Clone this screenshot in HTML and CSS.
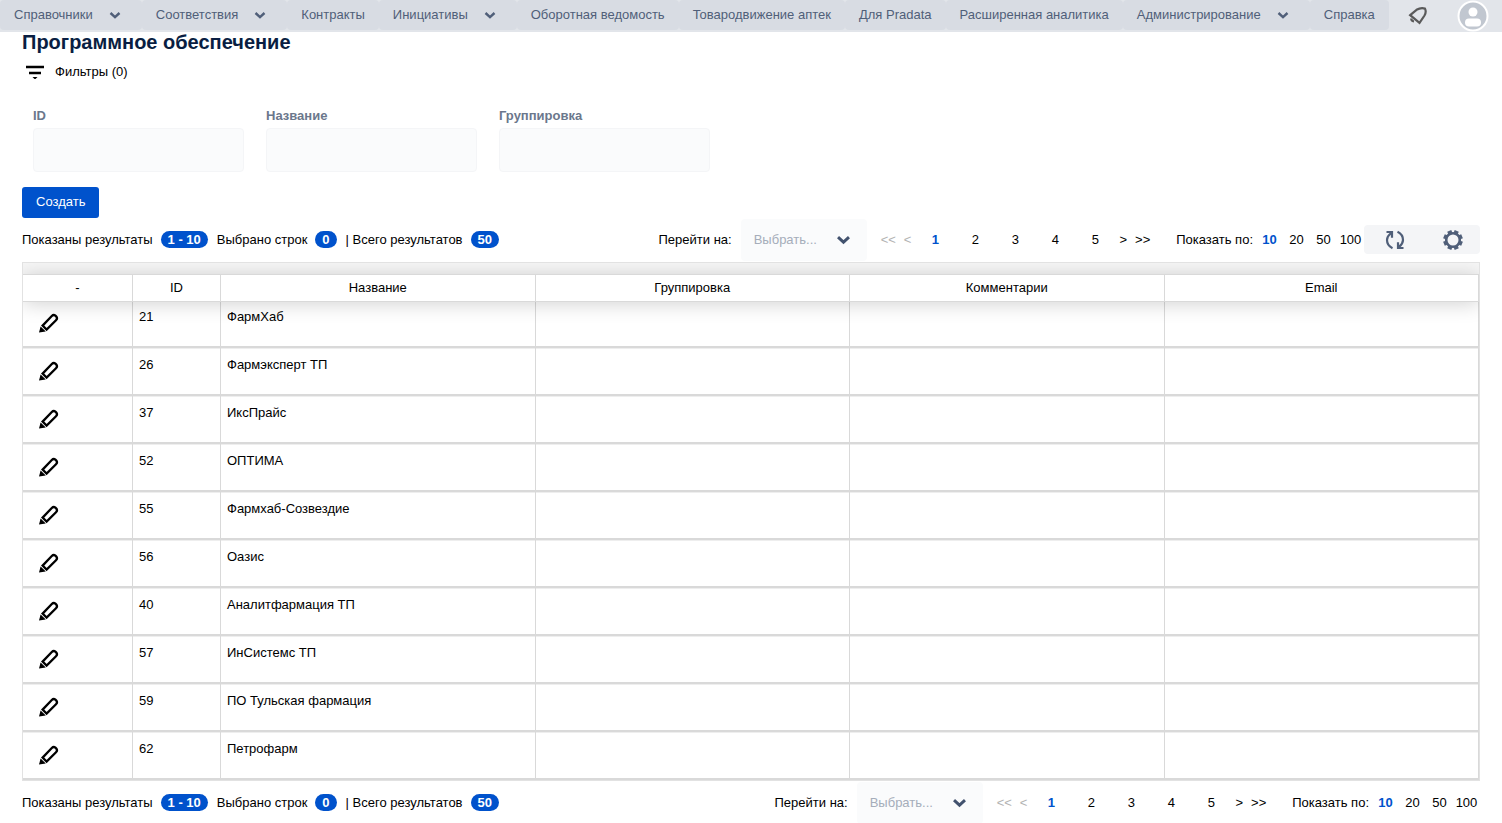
FILE: index.html
```html
<!DOCTYPE html>
<html lang="ru">
<head>
<meta charset="utf-8">
<title>Программное обеспечение</title>
<link rel="stylesheet" href="styles.css">
</head>
<body>
<svg class="sprite" aria-hidden="true">
  <symbol id="chevron" viewBox="0 0 14 14"><path d="M2.500 5 7 9.200l4.500-4.200" fill="none" stroke="currentColor" stroke-width="2.400"/></symbol>
  <symbol id="pencil" viewBox="0 0 20 20"><path d="M3.600 12.600 12.800 3Q14.600 1.200 16.400 2.700L17.300 3.600Q18.800 5.400 17 7.200L7.600 16.600Z" fill="none" stroke="currentColor" stroke-width="2.300"/><path d="M1.600 13.400 6.800 18.400 0 19.600Z" fill="currentColor"/></symbol>
</svg>

<header class="topbar">
  <nav class="menu">
    <button class="menu-item has-sub" type="button">Справочники <svg class="menu-chevron"><use href="#chevron"/></svg></button>
    <button class="menu-item has-sub" type="button">Соответствия <svg class="menu-chevron"><use href="#chevron"/></svg></button>
    <a class="menu-item" href="#">Контракты</a>
    <button class="menu-item has-sub" type="button">Инициативы <svg class="menu-chevron"><use href="#chevron"/></svg></button>
    <a class="menu-item" href="#">Оборотная ведомость</a>
    <a class="menu-item" href="#">Товародвижение аптек</a>
    <a class="menu-item" href="#">Для Pradata</a>
    <a class="menu-item" href="#">Расширенная аналитика</a>
    <button class="menu-item has-sub" type="button">Администрирование <svg class="menu-chevron"><use href="#chevron"/></svg></button>
    <a class="menu-item" href="#">Справка</a>
  </nav>
  <div class="account">
    <button class="icon-button" type="button" aria-label="Уведомления">
      <svg class="bell" viewBox="0 0 20 20"><path d="M2.200 9.200 8.500 3.800Q13 1.200 17 2.600Q18.600 6 16.500 9.500L11.500 16.800Z" fill="none" stroke="currentColor" stroke-width="2.200"/><path d="M3.200 12.500Q3.200 15 6 15.500" fill="none" stroke="currentColor" stroke-width="2.200"/></svg>
    </button>
    <button class="icon-button" type="button" aria-label="Профиль">
      <svg class="avatar" viewBox="0 0 32 32"><circle cx="16" cy="16" r="14.500" fill="#c1c7d0" stroke="#fff" stroke-width="2"/><circle cx="16" cy="12" r="4.500" fill="#fff"/><rect x="8" y="18.500" width="16" height="8" rx="4" fill="#fff"/></svg>
    </button>
  </div>
</header>

<main class="page">
  <h1 class="title">Программное обеспечение</h1>
  <button class="filter-toggle" type="button">
    <svg class="filter-icon" viewBox="0 0 20 14"><path d="M1 2h18M4 8h12" stroke="currentColor" stroke-width="2.400"/><path d="M7.500 12h5L10 14.500Z" fill="currentColor"/></svg>
    Фильтры (0)
  </button>

  <form class="filters">
    <div class="field"><label for="f-id">ID</label><input id="f-id" type="text"></div>
    <div class="field"><label for="f-name">Название</label><input id="f-name" type="text"></div>
    <div class="field"><label for="f-group">Группировка</label><input id="f-group" type="text"></div>
  </form>

  <button class="create" type="button">Создать</button>

  <section class="toolbar">
    <div class="summary">
      <span>Показаны результаты</span><span class="badge">1 - 10</span>
      <span class="selected">Выбрано строк</span><span class="badge">0</span>
      <span class="total">| Всего результатов</span><span class="badge">50</span>
    </div>
    <div class="paging">
      <label for="goto-top">Перейти на:</label>
      <div class="select"><select id="goto-top"><option>Выбрать...</option></select><svg class="select-chevron"><use href="#chevron"/></svg></div>
      <div class="pages">
        <button class="step" type="button" disabled>&lt;&lt;</button><button class="step" type="button" disabled>&lt;</button>
        <button class="num current" type="button">1</button><button class="num" type="button">2</button><button class="num" type="button">3</button><button class="num" type="button">4</button><button class="num" type="button">5</button>
        <button class="step" type="button">&gt;</button><button class="step" type="button">&gt;&gt;</button>
      </div>
      <span class="sizes-label">Показать по:</span>
      <div class="sizes">
        <button class="size current" type="button">10</button><button class="size" type="button">20</button><button class="size" type="button">50</button><button class="size" type="button">100</button>
      </div>
    </div>
    <div class="tools">
      <button class="tool" type="button" aria-label="Обновить">
        <svg viewBox="0 0 20 20"><path d="M7.500 18.200Q2 15.500 2 10Q2 6.500 6 3M1.500 2H7v5.800M12.500 1.800Q18 4.500 18 10Q18 13.500 14 17M18.500 18H13v-5.800" fill="none" stroke="currentColor" stroke-width="2.200"/></svg>
      </button>
      <button class="tool" type="button" aria-label="Настройки">
        <svg viewBox="0 0 20 20"><circle cx="10" cy="10" r="6.800" fill="none" stroke="currentColor" stroke-width="2.600"/><g stroke="currentColor" stroke-width="4.400" transform="rotate(22.500 10 10)"><path id="tooth" d="M10 .2v2.800M10 17v2.800"/><use href="#tooth" transform="rotate(45 10 10)"/><use href="#tooth" transform="rotate(90 10 10)"/><use href="#tooth" transform="rotate(135 10 10)"/></g></svg>
      </button>
    </div>
  </section>

  <div class="grid-frame">
    <table class="grid">
      <colgroup><col class="col-action"><col class="col-id"><col><col><col><col></colgroup>
      <thead><tr><th>-</th><th>ID</th><th>Название</th><th>Группировка</th><th>Комментарии</th><th>Email</th></tr></thead>
      <tbody>
        <tr><td><button class="edit" type="button" aria-label="Изменить"><svg><use href="#pencil"/></svg></button></td><td>21</td><td>ФармХаб</td><td></td><td></td><td></td></tr>
        <tr><td><button class="edit" type="button" aria-label="Изменить"><svg><use href="#pencil"/></svg></button></td><td>26</td><td>Фармэксперт ТП</td><td></td><td></td><td></td></tr>
        <tr><td><button class="edit" type="button" aria-label="Изменить"><svg><use href="#pencil"/></svg></button></td><td>37</td><td>ИксПрайс</td><td></td><td></td><td></td></tr>
        <tr><td><button class="edit" type="button" aria-label="Изменить"><svg><use href="#pencil"/></svg></button></td><td>52</td><td>ОПТИМА</td><td></td><td></td><td></td></tr>
        <tr><td><button class="edit" type="button" aria-label="Изменить"><svg><use href="#pencil"/></svg></button></td><td>55</td><td>Фармхаб-Созвездие</td><td></td><td></td><td></td></tr>
        <tr><td><button class="edit" type="button" aria-label="Изменить"><svg><use href="#pencil"/></svg></button></td><td>56</td><td>Оазис</td><td></td><td></td><td></td></tr>
        <tr><td><button class="edit" type="button" aria-label="Изменить"><svg><use href="#pencil"/></svg></button></td><td>40</td><td>Аналитфармация ТП</td><td></td><td></td><td></td></tr>
        <tr><td><button class="edit" type="button" aria-label="Изменить"><svg><use href="#pencil"/></svg></button></td><td>57</td><td>ИнСистемс ТП</td><td></td><td></td><td></td></tr>
        <tr><td><button class="edit" type="button" aria-label="Изменить"><svg><use href="#pencil"/></svg></button></td><td>59</td><td>ПО Тульская фармация</td><td></td><td></td><td></td></tr>
        <tr><td><button class="edit" type="button" aria-label="Изменить"><svg><use href="#pencil"/></svg></button></td><td>62</td><td>Петрофарм</td><td></td><td></td><td></td></tr>
      </tbody>
    </table>
  </div>

  <section class="toolbar">
    <div class="summary">
      <span>Показаны результаты</span><span class="badge">1 - 10</span>
      <span class="selected">Выбрано строк</span><span class="badge">0</span>
      <span class="total">| Всего результатов</span><span class="badge">50</span>
    </div>
    <div class="paging">
      <label for="goto-bottom">Перейти на:</label>
      <div class="select"><select id="goto-bottom"><option>Выбрать...</option></select><svg class="select-chevron"><use href="#chevron"/></svg></div>
      <div class="pages">
        <button class="step" type="button" disabled>&lt;&lt;</button><button class="step" type="button" disabled>&lt;</button>
        <button class="num current" type="button">1</button><button class="num" type="button">2</button><button class="num" type="button">3</button><button class="num" type="button">4</button><button class="num" type="button">5</button>
        <button class="step" type="button">&gt;</button><button class="step" type="button">&gt;&gt;</button>
      </div>
      <span class="sizes-label">Показать по:</span>
      <div class="sizes">
        <button class="size current" type="button">10</button><button class="size" type="button">20</button><button class="size" type="button">50</button><button class="size" type="button">100</button>
      </div>
    </div>
  </section>
</main>
</body>
</html>
```
FILE: styles.css
```css
* { box-sizing: border-box; }

body {
  margin: 0;
  background: #fff;
  color: #000;
  font: 13px/16px "Liberation Sans", Arial, sans-serif;
}

button, input, select { font: inherit; color: inherit; }
button { border: 0; padding: 0; background: none; cursor: pointer; white-space: nowrap; }
svg { display: block; }
.sprite { display: none; }

/* Top navigation */
.topbar {
  display: flex;
  justify-content: space-between;
  height: 32px;
  background: #e2e5ea;
}
.menu { display: flex; height: 30px; }
.menu-item {
  display: flex;
  align-items: center;
  padding: 0 14px;
  border-radius: 4px;
  background: #d8dce3;
  color: #505f79;
  text-decoration: none;
  white-space: nowrap;
}
.menu-item.has-sub { padding-right: 20px; gap: 15px; }
.menu-chevron { width: 14px; height: 14px; }
.account { display: flex; align-items: center; gap: 29px; padding-right: 13px; }
.bell { width: 20px; height: 20px; color: #5a5a5a; }
.avatar { width: 32px; height: 32px; }

/* Page */
.page { padding: 0 22px; }
.title { margin: 0; color: #091e42; font-size: 20px; line-height: 20px; font-weight: 700; }
.filter-toggle { display: flex; align-items: center; gap: 10px; height: 16px; margin: 12px 0 28px 3px; }
.filter-icon { width: 20px; height: 14px; }

.filters { display: flex; gap: 22px; padding: 0 11px; }
.field { display: flex; flex-direction: column; gap: 4px; width: 211px; }
.field label { color: #6b778c; font-weight: 700; }
.field input {
  width: 100%;
  height: 44px;
  padding: 0 8px;
  border: 1px solid #f4f5f7;
  border-radius: 4px;
  background: #fafbfc;
}

.create {
  display: block;
  height: 31px;
  margin-top: 15px;
  padding: 0 14px 2px;
  border-radius: 3px;
  background: #0052cc;
  color: #fff;
}

/* Result toolbar */
.toolbar { display: flex; align-items: center; height: 43px; }
.summary { display: flex; align-items: center; white-space: nowrap; }
.badge {
  margin-left: 8px;
  padding: 0 7px;
  border-radius: 9px;
  background: #0052cc;
  color: #fff;
  font-weight: 700;
  line-height: 17px;
}
.selected, .total { margin-left: 9px; }
.paging { display: flex; align-items: center; margin-left: auto; white-space: nowrap; }
.select { position: relative; width: 126px; margin: 0 10px 0 9px; }
.select select {
  width: 100%;
  height: 42px;
  padding: 0 36px 0 13px;
  border: 0;
  border-radius: 4px;
  background: #fafbfc;
  color: #a5adba;
  appearance: none;
}
.select-chevron {
  position: absolute;
  top: 12px;
  right: 15px;
  width: 17px;
  height: 17px;
  color: #42526e;
  pointer-events: none;
}
.pages { display: flex; }
.step { padding: 0 4px; }
.step:disabled { color: #b3b3b3; }
.num { width: 40px; }
.current { color: #0052cc; font-weight: 700; }
.sizes-label { margin: 0 3px 0 22px; }
.sizes { display: flex; }
.size { width: 27px; }
.tools { display: flex; width: 116px; border-radius: 4px; background: #f4f5f7; }
.tool { display: flex; flex: 1; justify-content: center; align-items: center; height: 29px; padding-left: 4px; color: #505f79; }
.tool svg { width: 20px; height: 20px; }

/* Table */
.grid-frame {
  margin-top: 1px;
  border: 1px solid #e2e2e2;
  padding-top: 11px;
  background: #f6f6f6;
  overflow: hidden;
}
.grid { width: 100%; table-layout: fixed; border-spacing: 0; background: #fff; }
.col-action { width: 110px; }
.col-id { width: 88px; }
.grid thead { position: relative; box-shadow: 0 2px 20px #0000002e; }
.grid th {
  height: 28px;
  padding: 0;
  border: solid #d9d9d9;
  border-width: 1px 1px 1px 0;
  background: #fff;
  font-weight: 400;
}
.grid td {
  height: 48px;
  padding: 9px 6px 7px;
  border: solid #d9d9d9;
  border-width: 0 1px 2px 0;
  box-shadow: inset 0 1px #eee;
  vertical-align: top;
}
.grid tbody tr:first-child td { height: 46px; padding-top: 7px; box-shadow: none; }
.edit { display: block; margin: 4px 0 0 10px; }
.edit svg { width: 20px; height: 20px; }
```
